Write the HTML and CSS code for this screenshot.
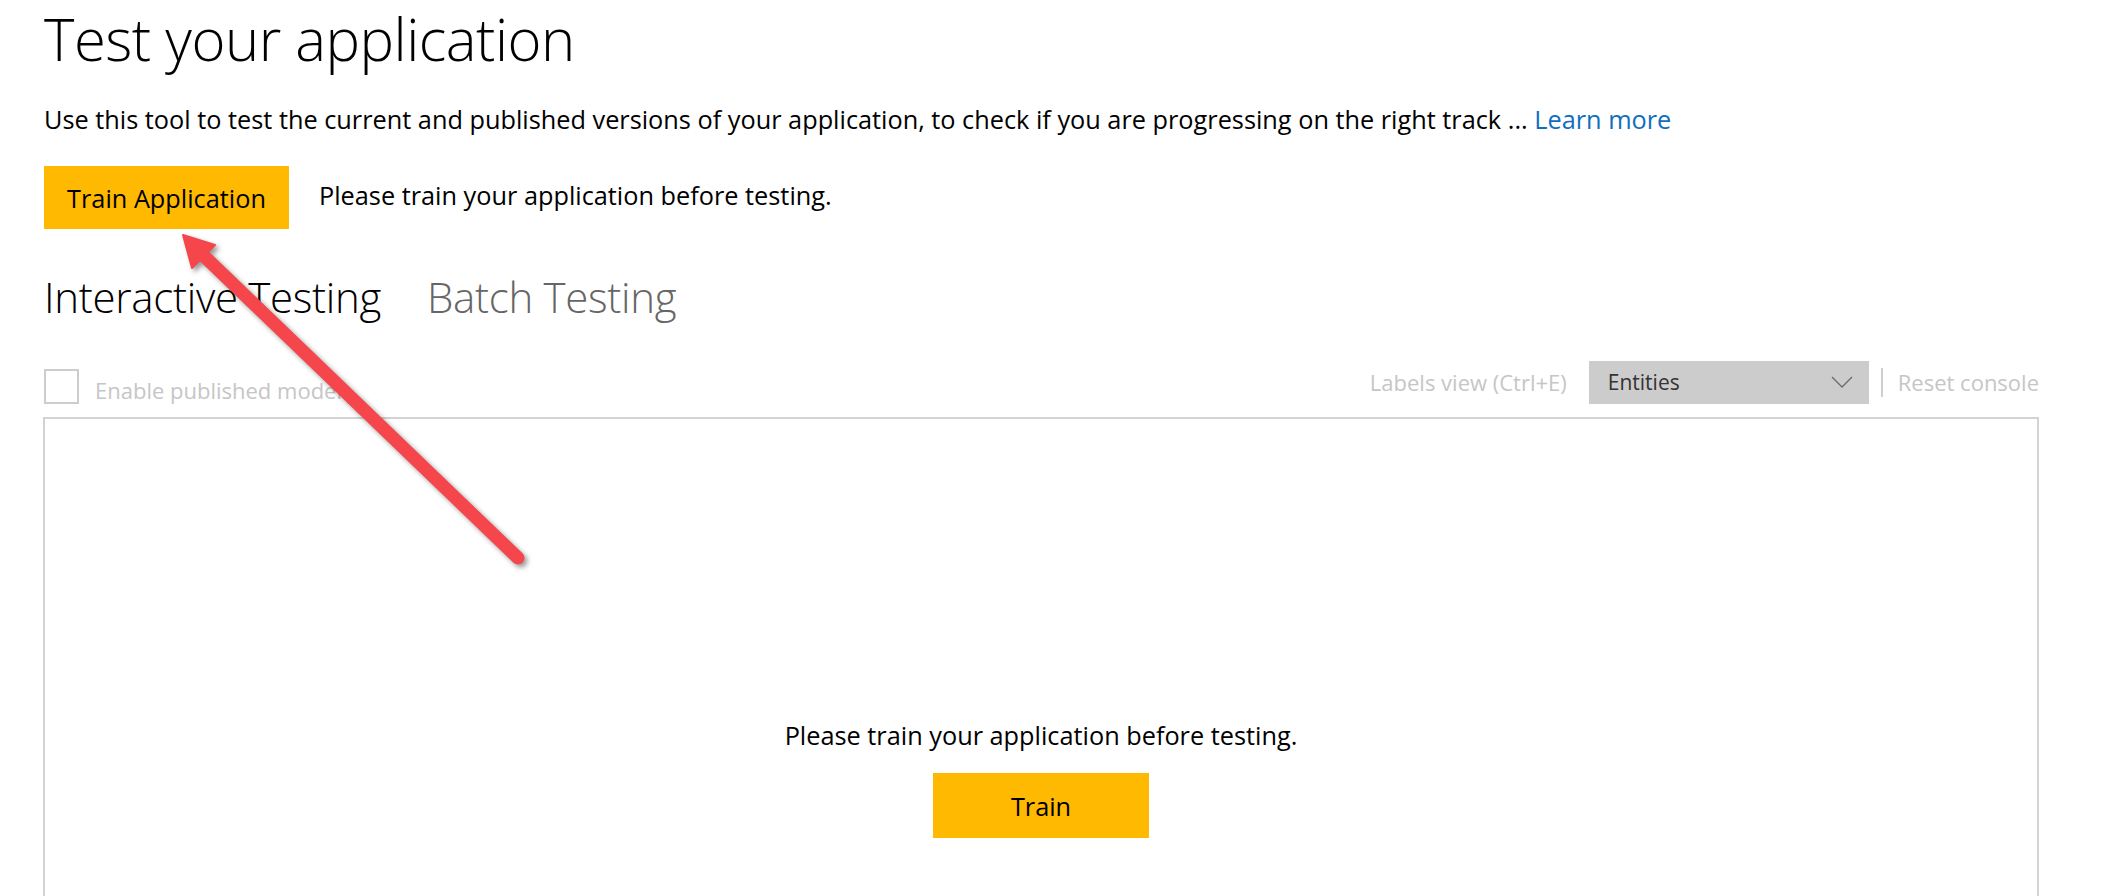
FILE: index.html
```html
<!DOCTYPE html>
<html lang="en">
<head>
<meta charset="utf-8">
<title>Test your application</title>
<link rel="stylesheet" href="styles.css">
</head>
<body>
<div class="page">
  <h1 class="title">Test your application</h1>
  <p class="desc">Use this tool to test the current and published versions of your application, to check if you are progressing on the right track ... <a class="link" href="#">Learn more</a></p>
  <div class="train-row">
    <button class="btn btn-train-app">Train Application</button>
    <span class="train-msg">Please train your application before testing.</span>
  </div>
  <div class="tabs">
    <span class="tab tab-active">Interactive Testing</span>
    <span class="tab">Batch Testing</span>
  </div>
  <div class="toolbar">
    <label class="check">
      <span class="check-box"></span>
      <span class="check-label">Enable published model</span>
    </label>
    <div class="tools">
      <span class="muted labels-view">Labels view (Ctrl+E)</span>
      <div class="select">
        <span>Entities</span>
        <svg class="chev" width="22" height="12" viewBox="0 0 22 12"><path d="M1 1 L11 11 L21 1" fill="none" stroke="#6a6a6a" stroke-width="1.3"/></svg>
      </div>
      <span class="sep"></span>
      <span class="muted">Reset console</span>
    </div>
  </div>
  <div class="console">
    <p class="console-msg">Please train your application before testing.</p>
    <button class="btn btn-train">Train</button>
  </div>
</div>
<svg class="arrow" width="2101" height="896" viewBox="0 0 2101 896">
  <g class="arrow-g">
    <line x1="205" y1="257" x2="518" y2="558" stroke="#f4464b" stroke-width="13" stroke-linecap="round"/>
    <polygon points="183,235 192,268 215,245" fill="#f4464b" stroke="#f4464b" stroke-width="2" stroke-linejoin="round"/>
  </g>
</svg>
</body>
</html>
```

FILE: styles.css
```css
html, body {
  margin: 0;
  padding: 0;
  background: #fff;
}
body {
  font-family: "Open Sans", "Noto Sans", sans-serif;
  color: #000;
  overflow: hidden;
  height: 896px;
  position: relative;
}
.page {
  padding: 4px 62px 0 44px;
}
.title {
  margin: 0;
  font-size: 58px;
  line-height: 70px;
  font-weight: 300;
  letter-spacing: -0.5px;
}
.desc {
  margin: 29px 0 0;
  font-size: 25.3px;
  line-height: 32px;
}
.link {
  color: #106ebe;
  text-decoration: none;
}
.train-row {
  margin-top: 31px;
  display: flex;
  align-items: center;
  gap: 30px;
}
.btn {
  border: 0;
  background: #ffb900;
  color: #000;
  font-family: inherit;
  font-size: 25.3px;
  padding: 0;
  display: flex;
  align-items: center;
  justify-content: center;
}
.btn-train-app {
  width: 245px;
  height: 63px;
}
.train-msg {
  font-size: 25.3px;
  margin-bottom: 5px;
}
.tabs {
  margin-top: 43px;
  display: flex;
  gap: 46px;
}
.tab {
  font-size: 42px;
  line-height: 50px;
  font-weight: 300;
  color: #666;
  letter-spacing: -0.3px;
}
.tab-active {
  color: #000;
}
.toolbar {
  margin-top: 38px;
  height: 44px;
  display: flex;
  align-items: center;
  justify-content: space-between;
}
.check {
  display: flex;
  align-items: center;
  gap: 16px;
  margin-top: 9px;
}
.check-box {
  width: 31px;
  height: 31px;
  border: 2px solid #cdcdcd;
}
.check-label {
  padding-top: 6px;
}
.check-label, .muted {
  font-size: 22px;
  color: #c6c6c6;
}
.tools {
  display: flex;
  align-items: center;
}
.labels-view {
  margin-right: 22px;
}
.select {
  width: 280px;
  height: 43px;
  background: #cccccc;
  box-sizing: border-box;
  padding: 0 16px 0 19px;
  display: flex;
  align-items: center;
  justify-content: space-between;
  font-size: 21px;
  color: #333;
}
.sep {
  width: 2px;
  height: 29px;
  background: #cfcfcf;
  margin: 0 15px 0 12px;
}
.console {
  margin-top: 13px;
  height: 600px;
  border: 2px solid #d3d3d3;
  display: flex;
  flex-direction: column;
  align-items: center;
  margin-left: -1px;
}
.console-msg {
  margin: 300px 0 0;
  font-size: 25.3px;
  line-height: 32px;
}
.btn-train {
  margin-top: 22px;
  width: 216px;
  height: 65px;
}
.arrow {
  position: absolute;
  left: 0;
  top: 0;
  pointer-events: none;
}
.arrow-g {
  filter: drop-shadow(3px 3px 2.5px rgba(0, 0, 0, 0.4));
}
```
